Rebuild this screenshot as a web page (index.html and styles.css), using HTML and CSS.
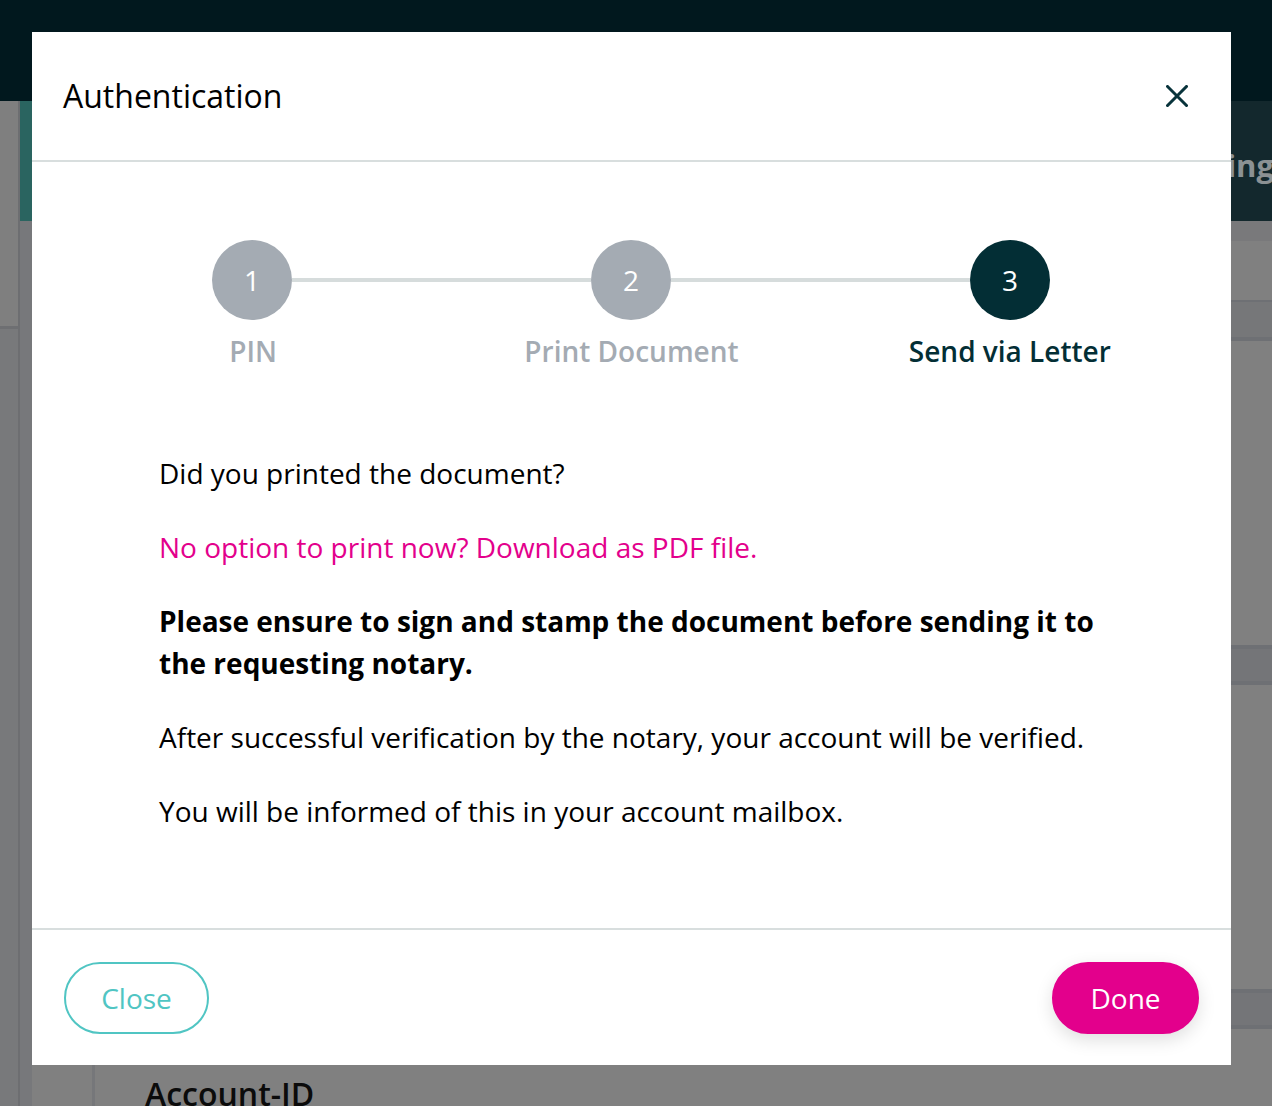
FILE: index.html
```html
<!DOCTYPE html>
<html lang="en">
<head>
<meta charset="utf-8">
<title>Authentication</title>
<link rel="stylesheet" href="styles.css">
</head>
<body>
<div class="page">
  <div class="topbar"></div>
  <div class="below">
    <div class="rail">
      <div class="rail-top"></div>
      <div class="rail-line"></div>
      <div class="rail-rest"></div>
    </div>
    <div class="rail-divider"></div>
    <div class="main">
      <div class="banner">
        <div class="banner-accent"></div>
        <div class="banner-dark"><span class="banner-title">Account Setting</span></div>
      </div>
      <div class="main-body">
        <div class="main-gutter"></div>
        <div class="side"></div>
        <div class="side-line"></div>
        <div class="content">
          <div class="row-strip"></div>
          <div class="row-space-a"></div>
          <div class="row-line-thin"></div>
          <div class="row-band-a"></div>
          <div class="row-line"></div>
          <div class="row-space"></div>
          <div class="row-line"></div>
          <div class="row-band"></div>
          <div class="row-line"></div>
          <div class="row-space"></div>
          <div class="row-line"></div>
          <div class="row-band"></div>
          <div class="row-line"></div>
          <h2 class="account-heading">Account-ID</h2>
        </div>
      </div>
    </div>
  </div>
</div>

<div class="modal" role="dialog" aria-labelledby="modal-title">
  <div class="modal-header">
    <h1 class="modal-title" id="modal-title">Authentication</h1>
    <button class="modal-close" aria-label="Close">
      <svg width="22" height="22" viewBox="0 0 22 22" aria-hidden="true">
        <path d="M1.5 1.5 L20.5 20.5 M20.5 1.5 L1.5 20.5" stroke="#08333b" stroke-width="3" stroke-linecap="square" fill="none"/>
      </svg>
    </button>
  </div>
  <div class="modal-body">
    <div class="stepper">
      <div class="step-track">
        <div class="step-circle done">1</div>
        <div class="step-connector"></div>
        <div class="step-circle done">2</div>
        <div class="step-connector"></div>
        <div class="step-circle active">3</div>
      </div>
      <div class="step-labels">
        <div class="step-label">PIN</div>
        <div class="step-label">Print Document</div>
        <div class="step-label active">Send via Letter</div>
      </div>
    </div>
    <div class="modal-text">
      <p>Did you printed the document?</p>
      <p><a class="pdf-link" href="#">No option to print now? Download as PDF file.</a></p>
      <p class="strong">Please ensure to sign and stamp the document before sending it to the requesting notary.</p>
      <p>After successful verification by the notary, your account will be verified.</p>
      <p>You will be informed of this in your account mailbox.</p>
    </div>
  </div>
  <div class="modal-footer">
    <button class="btn btn-outline">Close</button>
    <button class="btn btn-primary">Done</button>
  </div>
</div>
</body>
</html>
```

FILE: styles.css
```css
* { box-sizing: border-box; }

html, body {
  margin: 0;
  padding: 0;
}

body {
  width: 1272px;
  height: 1106px;
  overflow: hidden;
  background: #808080;
  font-family: "Open Sans", "Noto Sans", sans-serif;
  position: relative;
}

/* ---------- dimmed background page ---------- */
.page {
  display: flex;
  flex-direction: column;
  height: 1106px;
}

.topbar {
  height: 101px;
  background: #01181e;
  flex: none;
}

.below {
  flex: 1;
  display: flex;
}

.rail {
  width: 18px;
  display: flex;
  flex-direction: column;
}
.rail-top { height: 225px; background: #7f7f7f; }
.rail-line { height: 3px; background: #6e6f72; }
.rail-rest { flex: 1; background: #78797b; }

.rail-divider {
  width: 2px;
  background: #6d6e71;
}

.main {
  flex: 1;
  display: flex;
  flex-direction: column;
  min-width: 0;
}

.banner {
  height: 120px;
  display: flex;
  flex: none;
}
.banner-accent {
  width: 12px;
  background: #2a6460;
}
.banner-dark {
  flex: 1;
  background: #13282d;
  display: flex;
  align-items: center;
  justify-content: flex-end;
  overflow: hidden;
  padding-top: 8px;
}
.banner-title {
  font-size: 31px;
  font-weight: 700;
  color: #8b9193;
  white-space: nowrap;
  margin-right: -2px;
}

.main-body {
  flex: 1;
  display: flex;
}
.main-gutter { width: 12px; background: #77787b; }
.side { width: 60px; background: #808080; }
.side-line { width: 3px; background: #76777a; }

.content {
  flex: 1;
  display: flex;
  flex-direction: column;
  background: #808080;
}
.row-strip { height: 20px; background: #79797b; }
.row-space-a { height: 59px; }
.row-line-thin { height: 2px; background: #6e7074; }
.row-band-a { height: 35px; background: #767779; }
.row-line { height: 4px; background: #6e7074; }
.row-space { height: 304px; }
.row-band { height: 32px; background: #747578; }

.account-heading {
  margin: 45px 0 0 50px;
  font-size: 32px;
  line-height: 40px;
  font-weight: 600;
  color: #0b0b0b;
}

/* ---------- modal ---------- */
.modal {
  position: absolute;
  left: 32px;
  top: 32px;
  width: 1199px;
  background: #ffffff;
  display: flex;
  flex-direction: column;
}

.modal-header {
  height: 130px;
  padding: 0 32px 0 31px;
  display: flex;
  align-items: center;
  justify-content: space-between;
  border-bottom: 2px solid #d8dede;
}

.modal-title {
  margin: 0;
  font-size: 32px;
  font-weight: 400;
  color: #000000;
  line-height: 44px;
}

.modal-close {
  width: 44px;
  height: 44px;
  padding: 0;
  border: 0;
  background: transparent;
  display: flex;
  align-items: center;
  justify-content: center;
  cursor: pointer;
}

.modal-body {
  height: 768px;
  padding: 78px 32px 0;
  border-bottom: 2px solid #d8dede;
}

.stepper {
  display: flex;
  flex-direction: column;
}

.step-track {
  display: flex;
  align-items: center;
  padding: 0 149px 0 148px;
}

.step-circle {
  width: 80px;
  height: 80px;
  border-radius: 50%;
  flex: none;
  display: flex;
  align-items: center;
  justify-content: center;
  color: #ffffff;
  font-size: 28px;
  line-height: 1;
  background: #a4abb3;
}
.step-circle.active { background: #032e35; }

.step-connector {
  flex: 1;
  height: 4px;
  background: #d6dcdc;
}

.step-labels {
  display: grid;
  grid-template-columns: 1fr 1fr 1fr;
  margin-top: 10px;
}

.step-label {
  text-align: center;
  font-size: 28px;
  line-height: 42px;
  font-weight: 600;
  color: #a4abb3;
}
.step-label.active { color: #032e35; }

.modal-text {
  padding: 0 96px 0 95px;
  margin-top: 80px;
}

.modal-text p {
  margin: 0 0 32px;
  font-size: 28px;
  line-height: 42px;
  color: #000000;
}

.modal-text p.strong { font-weight: 700; }

.pdf-link {
  color: #e3008c;
  text-decoration: none;
}

.modal-footer {
  padding: 32px 32px 31px;
  display: flex;
  justify-content: space-between;
  align-items: center;
}

.btn {
  height: 72px;
  border-radius: 36px;
  font-family: "Open Sans", "Noto Sans", sans-serif;
  font-size: 28px;
  line-height: 1;
  cursor: pointer;
  display: flex;
  align-items: center;
  justify-content: center;
}

.btn-outline {
  width: 145px;
  background: #ffffff;
  border: 2px solid #50c5c3;
  color: #50c5c3;
}

.btn-primary {
  width: 147px;
  background: #e3008c;
  border: 2px solid #e3008c;
  color: #ffffff;
  box-shadow: 0 6px 18px rgba(0, 0, 0, 0.13);
}
```
